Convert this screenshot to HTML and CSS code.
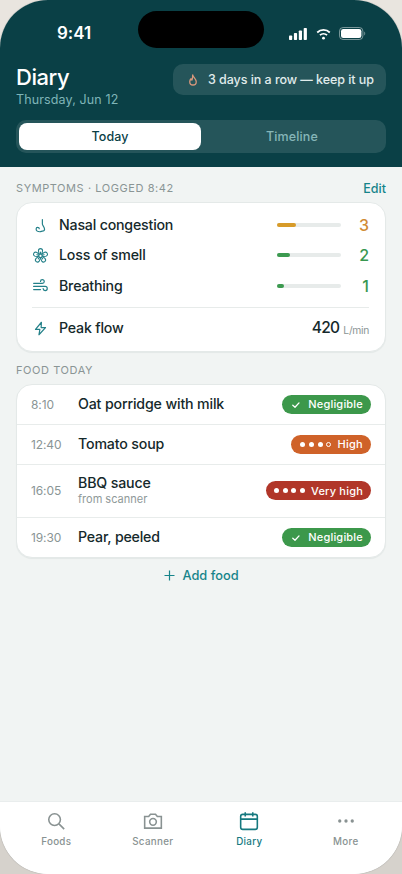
FILE: index.html
```html
<!DOCTYPE html>
<html lang="en">
<head>
<meta charset="utf-8">
<title>Diary</title>
<link rel="stylesheet" href="styles.css">
</head>
<body>
<div class="phone">
  <header class="header">
    <div class="status">
      <span class="clock">9:41</span>
      <span class="island"></span>
      <div class="status-icons">
        <svg width="18" height="12" viewBox="0 0 18 12" fill="#fff"><rect x="0" y="7.5" width="3.2" height="4.5" rx=".8"/><rect x="4.9" y="5" width="3.2" height="7" rx=".8"/><rect x="9.8" y="2.5" width="3.2" height="9.5" rx=".8"/><rect x="14.7" y="0" width="3.2" height="12" rx=".8"/></svg>
        <svg width="15" height="12" viewBox="0 0 16 12" fill="none" stroke="#fff" stroke-width="1.9"><path d="M1.3 4.4a9.6 9.6 0 0 1 13.4 0M4.2 7.3a5.6 5.6 0 0 1 7.6 0"/><circle cx="8" cy="10.4" r="1.5" fill="#fff" stroke="none"/></svg>
        <svg width="27" height="13" viewBox="0 0 27 13" fill="none"><rect x=".5" y=".5" width="23.4" height="12" rx="3.6" stroke="#fff" stroke-opacity=".45"/><rect x="2" y="2" width="20.4" height="9" rx="2.3" fill="#fff"/><path d="M25.3 4.5v4c1.2-.5 1.2-3.5 0-4z" fill="#fff" fill-opacity=".5"/></svg>
      </div>
    </div>
    <div class="title-row">
      <div>
        <h1>Diary</h1>
        <p class="date">Thursday, Jun 12</p>
      </div>
      <div class="streak">
        <svg width="12" height="12" viewBox="0 0 24 24" fill="none" stroke="#d9987c" stroke-width="2.6" stroke-linejoin="round" stroke-linecap="round"><path d="M11.500 2c.5 4 7 7.500 7 13.500a6.500 6.500 0 0 1-13 0c0-2.500 1-4.500 2.500-6 .3 1.500.8 2 1.800 2.500C12 9 10.500 6 11.500 2z"/></svg>
        <span>3 days in a row — keep it up</span>
      </div>
    </div>
    <div class="segments">
      <span class="segment selected">Today</span>
      <span class="segment">Timeline</span>
    </div>
  </header>

  <main>
    <div class="section-head symptoms-head"><span>SYMPTOMS · LOGGED 8:42</span><a class="edit">Edit</a></div>
    <section class="card symptoms">
      <div class="symptom">
        <svg class="icon" viewBox="0 0 24 24"><path d="M15 2.500v7c0 2.500 3.500 5 3.500 8.500 0 2-1.500 3-3.500 3-1.500 0-2 1-4 1-3.500 0-6-1.500-6-4.500 0-1.500 1-2.500 2.500-2.500s2.500 1 2.500 2"/></svg>
        <span class="name">Nasal congestion</span>
        <span class="meter"><span class="fill amber" style="width:30%"></span></span>
        <span class="score amber-text">3</span>
      </div>
      <div class="symptom">
        <svg class="icon flower" viewBox="0 0 24 24"><circle cx="12" cy="12.500" r="2.800"/><path id="petal" d="M12 9.700V6.500M9.800 9.500 8.700 4.500C8.700 1.800 10.500 1 12 1s3.300.8 3.300 3.500l-1.100 5"/><use href="#petal" transform="rotate(72 12 12.500)"/><use href="#petal" transform="rotate(144 12 12.500)"/><use href="#petal" transform="rotate(216 12 12.500)"/><use href="#petal" transform="rotate(288 12 12.500)"/></svg>
        <span class="name">Loss of smell</span>
        <span class="meter"><span class="fill green" style="width:20%"></span></span>
        <span class="score green-text">2</span>
      </div>
      <div class="symptom">
        <svg class="icon" viewBox="0 0 24 24"><path d="M1 8.500h14a3 3 0 1 0-3-3M1 13.500h18.500a3.300 3.300 0 1 1-3.300 3.500M1 18.500h11"/></svg>
        <span class="name">Breathing</span>
        <span class="meter"><span class="fill green" style="width:11%"></span></span>
        <span class="score green-text">1</span>
      </div>
      <div class="symptom peak">
        <svg class="icon" viewBox="0 0 24 24"><path d="M13.500 2 4 13.500h7L9.500 22 20 10.500h-7z"/></svg>
        <span class="name">Peak flow</span>
        <span class="reading">420</span><span class="unit">L/min</span>
      </div>
    </section>

    <div class="section-head food-head"><span>FOOD TODAY</span></div>
    <section class="card foods">
      <div class="food"><time>8:10</time><span class="dish">Oat porridge with milk</span>
        <span class="badge ok"><svg width="8" height="8" viewBox="0 0 8 8"><path d="M.8 4.300 3 6.300 7 1.900"/></svg>Negligible</span></div>
      <div class="food"><time>12:40</time><span class="dish">Tomato soup</span>
        <span class="badge high"><span class="dots"><i></i><i></i><i></i><i class="hollow"></i></span>High</span></div>
      <div class="food tall"><time>16:05</time><span class="dish">BBQ sauce<small>from scanner</small></span>
        <span class="badge very-high"><span class="dots"><i></i><i></i><i></i><i></i></span>Very high</span></div>
      <div class="food"><time>19:30</time><span class="dish pear">Pear, peeled</span>
        <span class="badge ok"><svg width="8" height="8" viewBox="0 0 8 8"><path d="M.8 4.300 3 6.300 7 1.900"/></svg>Negligible</span></div>
    </section>
    <div class="add"><svg width="11" height="11" viewBox="0 0 11 11"><path d="M5.500.5v10M.5 5.500h10"/></svg>Add food</div>
  </main>

  <nav class="tabs">
    <div class="tab"><svg viewBox="0 0 24 24"><circle cx="10.300" cy="10.300" r="7"/><path d="m15.500 15.500 6.300 6.300"/></svg>Foods</div>
    <div class="tab"><svg viewBox="0 0 24 24"><path d="M2 6.500h4.800L9 3.800h6l2.200 2.700H22v14H2z"/><circle cx="12" cy="13" r="4"/></svg>Scanner</div>
    <div class="tab active"><svg viewBox="0 0 24 24"><rect x="2" y="4" width="20" height="18" rx="2.500"/><path d="M2 9.700h20M7.500 1.500v5M16.500 1.500v5"/></svg>Diary</div>
    <div class="tab"><svg viewBox="0 0 24 24"><g fill="currentColor" stroke="none"><circle cx="4.500" cy="12" r="2"/><circle cx="12" cy="12" r="2"/><circle cx="19.500" cy="12" r="2"/></g></svg>More</div>
  </nav>
</div>
</body>
</html>
```
FILE: styles.css
```css
* { box-sizing: border-box; }
body { margin: 0; background: linear-gradient(#e9e5df 0 50%, #d6d2cc 50%); font-family: Inter, sans-serif; color: #15292b; }
.phone { width: 402px; height: 874px; display: flex; flex-direction: column; overflow: hidden; border-radius: 48px; background: #f1f4f3; box-shadow: 0 0 1px rgba(0, 0, 0, .5); }
h1, p { margin: 0; }
svg { display: block; flex: none; }

.header { height: 167px; background: #0a4046; padding: 0 16px; color: #fff; }
.status { height: 64px; padding-top: 11px; display: grid; grid-template-columns: 122px 126px 1fr; align-items: start; }
.clock { padding: 12px 0 0 41px; font-size: 17px; line-height: 21px; font-weight: 600; letter-spacing: -.05px; }
.island { height: 37px; border-radius: 19px; background: #000; }
.status-icons { display: flex; align-items: center; gap: 9px; padding: 16px 0 0 25px; }
.status-icons svg:last-child { margin-left: -1px; }
.title-row { display: flex; justify-content: space-between; align-items: flex-start; height: 56px; }
h1 { font-size: 22px; line-height: 26px; margin-bottom: 2px; font-weight: 500; letter-spacing: -.45px; }
.date { font-size: 12.500px; line-height: 16px; color: #7fb5b8; letter-spacing: .13px; }
.streak { display: flex; align-items: center; width: 213px; height: 31px; border-radius: 10px; background: #25555a; padding-left: 14px; gap: 9px; font-size: 12.500px; font-weight: 500; letter-spacing: -.05px; white-space: nowrap; color: #e0ecec; }
.segments { display: flex; height: 33px; padding: 3px; border-radius: 10px; background: #25555a; }
.segment { flex: 1; display: flex; align-items: center; justify-content: center; border-radius: 8px; font-size: 12.500px; font-weight: 500; color: #86b6b8; letter-spacing: .12px; }
.selected { background: #fff; color: #0a4046; }

main { flex: 1; padding: 0 16px; }
.section-head { display: flex; justify-content: space-between; align-items: center; font-size: 11px; letter-spacing: .57px; color: #8a9595; }
.symptoms-head { height: 35px; padding-top: 7px; }
.food-head { height: 32px; padding-top: 4px; }
.edit { font-size: 12.500px; font-weight: 500; letter-spacing: 0; color: #16848a; }
.card { background: #fff; border: 1px solid #e4e9e8; border-radius: 16px; box-shadow: 0 1px 1px rgba(20, 50, 50, .06); }
.symptoms { height: 150px; padding: 7px 16px 0 15px; }
.symptom { display: flex; align-items: center; height: 30.300px; }
.icon { width: 15px; height: 15px; margin: 0 12px 0 1px; overflow: visible; fill: none; stroke: #248089; stroke-width: 1.900; stroke-linecap: round; stroke-linejoin: round; }
.flower { stroke-width: 1.700; }
.name { flex: 1; margin: -1px 0 0 -1px; font-size: 14.200px; font-weight: 450; letter-spacing: -.2px; }
.meter { width: 64px; height: 4px; border-radius: 2px; background: #e7ebea; }
.fill { display: block; height: 4px; border-radius: 2px; }
.amber { background: #d79b29; }
.green { background: #3c9a50; }
.score { width: 28px; text-align: right; font-size: 16px; font-weight: 450; }
.amber-text { color: #d18b35; }
.green-text { color: #389750; }
.peak { height: 42px; margin-top: 6px; border-top: 1px solid #e7ebea; }
.reading { margin-top: -1px; font-size: 15.500px; font-weight: 500; letter-spacing: -.7px; }
.unit { margin: 3px 0 0 4px; font-size: 10.300px; letter-spacing: -.3px; color: #8a9595; }

.foods { height: 174px; overflow: hidden; }
.food { display: flex; align-items: center; height: 40px; padding: 0 14px 1px; border-bottom: 1px solid #e8eceb; }
.food:last-child { border-bottom: 0; padding-bottom: 2px; }
.tall { height: 53px; }
time { width: 47px; font-size: 12px; letter-spacing: -.1px; color: #8a9595; }
.dish { flex: 1; font-size: 14.200px; line-height: 18px; font-weight: 450; letter-spacing: -.16px; }
.tall .dish { margin-top: -2px; }
.pear { letter-spacing: -.2px; }
.dish small { display: block; font-size: 11px; line-height: 14px; font-weight: 400; letter-spacing: 0; color: #8f9999; }
.badge { display: flex; align-items: center; height: 19px; padding: 0 8px; border-radius: 10px; color: #fff; font-size: 11px; font-weight: 500; letter-spacing: .2px; }
.badge svg { margin: 1px 8px 0 2px; fill: none; stroke: #fff; stroke-width: 1.300; stroke-linecap: round; stroke-linejoin: round; }
.ok { background: #3c984b; }
.high { background: #cf6229; padding-left: 9px; letter-spacing: .3px; }
.very-high { background: #b13629; }
.dots { display: flex; gap: 3.700px; margin-right: 6px; }
.dots i { width: 5px; height: 5px; border-radius: 50%; background: #fff; }
.dots .hollow { background: none; border: 1px solid #fff; }
.add { display: flex; align-items: center; justify-content: center; gap: 7px; height: 35px; padding-left: 1px; color: #16848a; font-size: 12.800px; font-weight: 500; }
.add svg { fill: none; stroke: currentColor; stroke-width: 1.200; }

.tabs { display: flex; height: 73px; padding: 9px 8px 0; border-top: 1px solid #e9eded; background: #fff; }
.tab { flex: 1; display: flex; flex-direction: column; align-items: center; gap: 4px; font-size: 9.800px; line-height: 13px; font-weight: 450; letter-spacing: .3px; color: #899292; }
.tab svg { width: 20px; height: 20px; fill: none; stroke: currentColor; stroke-width: 1.900; }
.tab.active { color: #16797f; font-weight: 500; }
```
